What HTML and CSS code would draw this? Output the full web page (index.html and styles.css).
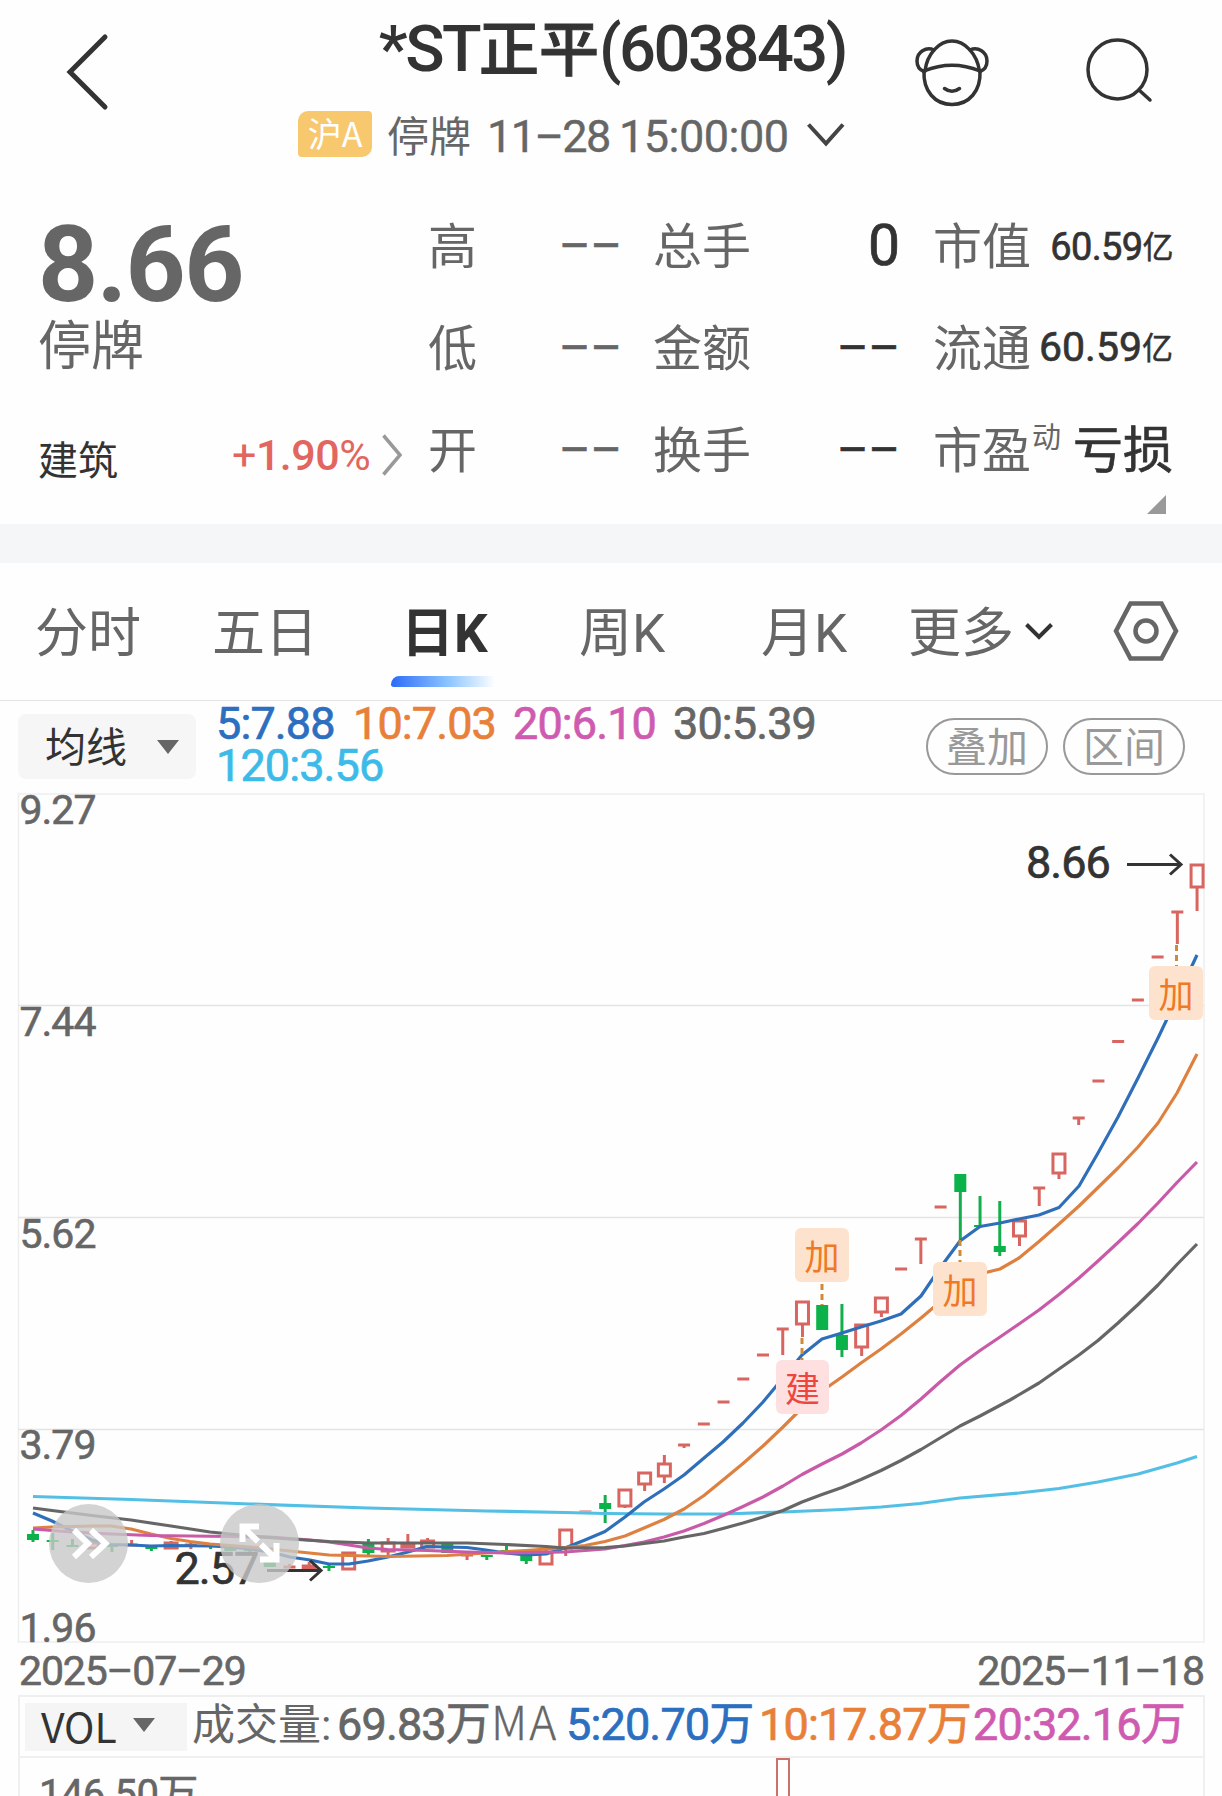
FILE: index.html
```html
<!DOCTYPE html>
<html lang="zh-Hans">
<head>
  <meta charset="UTF-8">
  <title>*ST正平(603843)</title>
  <link rel="stylesheet" href="styles.css">
</head>
<body>
  <header class="header">
    <svg class="back" width="60" height="90" viewBox="56 27 60 90"><path d="M105 37 L70 72 L105 107"/></svg>
    <div class="heading">
      <h1>*ST<span class="cn">正平</span>(603843)</h1>
      <div class="status">
        <span class="market">沪A</span>
        <span class="state">停牌</span>
        <span class="date">11–28</span>
        <span class="time">15:00:00</span>
        <svg width="40" height="30" viewBox="0 0 40 30"><path d="M2.500 4.500 L20 23.500 L37 4.500"/></svg>
      </div>
    </div>
    <div class="actions">
      <svg width="80" height="76" viewBox="912 34 80 76">
        <path d="M924 71 C923 91 935 104.500 952 104.500 C969 104.500 981 91 980 71"/>
        <path d="M925 71 C927 54 939 41 952 41 C965 41 977 54 979.500 71"/>
        <path d="M924 71 Q952 59.500 980 71"/>
        <path d="M934 50 C926 46.500 917 52 917 61 C917 66 920 70 924 71.500"/>
        <path d="M970 50 C978 46.500 987 52 987 61 C987 66 984 70 980 71.500"/>
        <path d="M944.500 88.500 Q952 94 959.500 88.500"/>
      </svg>
      <svg width="80" height="76" viewBox="1078 34 80 76">
        <circle cx="1117.500" cy="69.500" r="29.500"/>
        <path d="M1139 90 L1150 100"/>
      </svg>
    </div>
  </header>

  <section class="quote">
    <div class="price-box">
      <div class="price">8.66</div>
      <div class="price-state">停牌</div>
      <div class="industry">
        <span class="sector">建筑</span>
        <span class="up"><i>+</i>1.90<i>%</i></span>
        <svg width="22" height="46" viewBox="0 0 22 46"><path d="M2.500 3.500 L19 23 L2.500 42.500"/></svg>
      </div>
    </div>
    <div class="stats">
      <div class="stat"><span>高</span><b class="dash gray">––</b></div>
      <div class="stat"><span>总手</span><b class="num">0</b></div>
      <div class="stat"><span>市值</span><b class="small">60.59<em>亿</em></b></div>
      <div class="stat"><span>低</span><b class="dash gray">––</b></div>
      <div class="stat"><span>金额</span><b class="dash">––</b></div>
      <div class="stat"><span>流通</span><b class="mid">60.59<em>亿</em></b></div>
      <div class="stat"><span>开</span><b class="dash gray">––</b></div>
      <div class="stat"><span>换手</span><b class="dash">––</b></div>
      <div class="stat"><span>市盈<sup>动</sup></span><b class="text">亏损</b></div>
    </div>
    <div class="expand"></div>
  </section>

  <div class="band"></div>

  <nav class="tabs">
    <span class="tab">分时</span>
    <span class="tab">五日</span>
    <span class="tab active">日K</span>
    <span class="tab">周K</span>
    <span class="tab">月K</span>
    <span class="tab more">更多<svg width="30" height="20" viewBox="0 0 30 20"><path d="M2.500 3.500 L15 16 L27.500 3.500"/></svg></span>
    <svg class="setting" width="68" height="64" viewBox="0 0 68 64">
      <path d="M18.500 4.500 H49.500 L64 32 L49.500 59.500 H18.500 L4 32 Z"/>
      <circle cx="34" cy="32" r="10.500"/>
    </svg>
  </nav>

  <div class="ma-bar">
    <div class="picker"><span>均线</span><i class="caret"></i></div>
    <div class="ma-list">
      <span class="c5">5:7.88</span><span class="c10">10:7.03</span><span class="c20">20:6.10</span><span class="c30">30:5.39</span>
      <span class="c120">120:3.56</span>
    </div>
    <div class="pill">叠加</div>
    <div class="pill">区间</div>
  </div>

  <svg class="kline" id="kline" width="1222" height="850" viewBox="0 793 1222 850">
    <g class="grid">
      <path d="M18.500 794 H1204 V1642 H18.500 Z"/>
      <path class="inner" d="M18 1005.500 H1204 M18 1217.500 H1204 M18 1429.500 H1204"/>
    </g>
    <g id="candles"></g>
    <g id="lines"></g>
    <g class="axis">
      <text x="19.500" y="824">9.27</text>
      <text x="19.500" y="1036">7.44</text>
      <text x="19.500" y="1248">5.62</text>
      <text x="19.500" y="1459">3.79</text>
      <text x="19.500" y="1641.500">1.96</text>
    </g>
    <g class="mark">
      <text x="1026" y="878">8.66</text>
      <path d="M1127 864.500 H1181 M1170 854.500 L1181 864.500 L1170 874.500"/>
      <text x="174.500" y="1584">2.57</text>
      <path d="M267 1570.500 H321 M310 1560.500 L321 1570.500 L310 1580.500"/>
    </g>
    <g class="link">
      <path d="M822 1284 V1305 M802 1338 V1360 M960 1240 V1262 M1176.500 945 V966"/>
    </g>
    <g class="tags">
      <rect x="795" y="1228" width="54" height="54" rx="6"/><text x="822" y="1270">加</text>
      <rect x="933" y="1262" width="54" height="54" rx="6"/><text x="960" y="1304">加</text>
      <rect x="1149" y="966" width="54" height="54" rx="6"/><text x="1176" y="1008">加</text>
      <g class="build"><rect x="776" y="1360" width="53" height="54" rx="6"/><text x="802.500" y="1402">建</text></g>
    </g>
    <g class="float">
      <circle cx="88.500" cy="1543.500" r="39.500"/>
      <circle cx="259.500" cy="1543.500" r="39.500"/>
      <path d="M74 1530 L88 1543.500 L74 1557 M91 1530 L105.500 1543.500 L91 1557"/>
      <path d="M243 1527 L258 1541.500 M261 1544.500 L276 1559 M242.500 1542 V1526.500 H259 M276.500 1543 V1559.500 H260"/>
    </g>
  </svg>

  <div class="dates"><span>2025–07–29</span><span>2025–11–18</span></div>

  <div class="vol-bar">
    <div class="vol-picker">VOL<i class="caret"></i></div>
    <div class="vol-list">
      <span class="vol-name">成交量:</span><span class="vol-num">69.83万</span><span class="vol-ma">MA</span><span class="c5">5:20.70万</span><span class="c10">10:17.87万</span><span class="c20">20:32.16万</span>
    </div>
  </div>
  <div class="vol-chart">
    <span>146.50万</span>
    <i class="vol-column"></i>
  </div>

  <script src="chart.js"></script>
</body>
</html>
```
FILE: styles.css
```css
* {
  box-sizing: border-box;
}
body {
  margin: 0;
  width: 1222px;
  height: 1796px;
  overflow: hidden;
  background: #fefefe;
  color: #666;
  font-family: Roboto, "Noto Sans CJK SC", sans-serif;
}
svg {
  display: block;
  fill: none;
  flex: none;
  overflow: visible;
}
i, em {
  font-style: normal;
}

/* header */
.header {
  display: grid;
  grid-template-columns: 298px 548px 1fr;
  height: 194px;
}
.back {
  margin: 27px 0 0 56px;
  stroke: #333;
  stroke-width: 5;
  stroke-linecap: round;
}
h1 {
  margin: 0;
  height: 97px;
  line-height: 98px;
  font-size: 65px;
  font-weight: 500;
  letter-spacing: -2.500px;
  text-align: right;
  white-space: nowrap;
  color: #333;
}
h1 .cn {
  font-size: 60px;
  letter-spacing: 0;
  -webkit-text-stroke: 1px #333;
}
.status {
  display: flex;
  align-items: center;
  height: 79px;
  font-size: 45px;
  white-space: nowrap;
}
.market {
  width: 74px;
  height: 46px;
  margin-bottom: 5px;
  line-height: 44px;
  border-radius: 10px 4px 10px 4px;
  background: #f7c86e;
  color: #fff;
  font-family: "Noto Sans CJK SC", sans-serif;
  font-size: 34px;
  text-align: center;
}
.state {
  width: 101px;
  padding: 0 0 6px 15px;
  font-size: 42px;
}
.date {
  width: 132px;
  padding-left: 14px;
  letter-spacing: -1.600px;
  -webkit-text-stroke: .400px;
}
.time {
  width: 186px;
  padding-left: 14px;
  letter-spacing: -.500px;
  -webkit-text-stroke: .400px;
}
.status svg {
  margin: 0 0 3px 15px;
  stroke: #444;
  stroke-width: 4;
}
.actions {
  display: flex;
  padding: 34px 0 0 66px;
  gap: 86px;
}
.actions svg {
  stroke: #333;
  stroke-width: 3.500;
  stroke-linecap: round;
}

/* quote */
.quote {
  position: relative;
  display: flex;
  height: 330px;
  padding-left: 38px;
}
.price-box {
  width: 390px;
  padding-top: 17px;
}
.price {
  height: 112px;
  line-height: 110px;
  font-size: 105px;
  font-weight: 700;
  letter-spacing: -1.600px;
}
.price-state {
  height: 48px;
  line-height: 48px;
  font-size: 53px;
}
.industry {
  display: flex;
  align-items: center;
  height: 60px;
  margin-top: 54px;
  font-size: 40px;
  color: #333;
}
.sector {
  padding-top: 5px;
}
.industry .up {
  width: 141px;
  margin-left: auto;
  font-size: 43px;
  font-weight: 500;
  letter-spacing: -.500px;
  white-space: nowrap;
  color: #e2665f;
}
.up i {
  font-weight: 400;
}
.industry svg {
  margin: 0 25px 0 8px;
  stroke: #999;
  stroke-width: 3.500;
}
.stats {
  display: grid;
  grid-template-columns: 192px 247px 240px;
  grid-auto-rows: 102px;
  column-gap: 33px;
}
.stat {
  display: flex;
  justify-content: space-between;
  align-items: center;
  font-size: 49px;
  white-space: nowrap;
}
.stat > span {
  padding-bottom: 6px;
}
.stat sup {
  font-size: 29px;
  vertical-align: 20px;
  line-height: 0;
  margin-left: 1px;
}
.stat b {
  font-weight: 400;
  color: #333;
  -webkit-text-stroke: .700px;
}
.stat .gray {
  margin-right: -2px;
  color: #666;
}
.stat .dash {
  font-size: 48px;
}
.stat .num {
  font-size: 57px;
}
.stat .small {
  font-size: 38px;
  letter-spacing: -.600px;
}
.stat .mid {
  font-size: 41px;
}
.stat em {
  font-size: 31px;
  vertical-align: 2px;
  -webkit-text-stroke: .500px;
}
.stat .text {
  padding-bottom: 7px;
  font-size: 50px;
}
.expand {
  position: absolute;
  left: 1147px;
  top: 301px;
  border-left: 19px solid transparent;
  border-bottom: 19px solid #999;
}
.band {
  height: 39px;
  background: #f5f6f8;
}

/* period tabs */
.tabs {
  display: flex;
  align-items: flex-start;
  height: 138px;
  padding-left: 35px;
  border-bottom: 1px solid #e3e3e3;
  font-size: 53px;
  line-height: 142px;
}
.tab {
  position: relative;
  width: 182px;
  height: 137px;
  white-space: nowrap;
}
.tab:nth-child(1) {
  width: 177px;
}
.tab:nth-child(2) {
  width: 189px;
}
.tab:nth-child(3) {
  width: 178px;
}
.tab.active {
  color: #333;
  font-weight: 700;
}
.tab.active::after {
  content: "";
  position: absolute;
  left: -10px;
  top: 113px;
  width: 104px;
  height: 11px;
  border-radius: 9px 0 0 3px;
  background: linear-gradient(90deg, #2c6cf6, #8cc5ff 55%, #fefefe);
}
.tab:nth-child(5) {
  width: 147px;
}
.tab.more {
  display: flex;
  gap: 10px;
  width: 205px;
}
.more svg {
  margin-top: 58px;
  stroke: #333;
  stroke-width: 4;
}
.setting {
  margin: 36px 0 0 -1px;
  stroke: #666;
  stroke-width: 4.500;
}

/* moving averages */
.ma-bar {
  display: flex;
  height: 92px;
  padding-left: 18px;
}
.picker {
  display: flex;
  align-items: center;
  gap: 30px;
  width: 178px;
  height: 65px;
  margin-top: 13px;
  padding-left: 27px;
  border-radius: 8px;
  background: #f6f6f6;
  font-size: 41px;
  color: #333;
}
.picker span {
  padding-bottom: 5px;
}
.caret {
  border: 11px solid transparent;
  border-top: 14px solid #666;
  border-bottom: 0;
}
.ma-list {
  width: 710px;
  margin-left: 20px;
  padding-top: 2px;
  font-size: 45px;
  letter-spacing: -.900px;
  line-height: 42px;
  -webkit-text-stroke: .700px;
}
.ma-list span {
  display: inline-block;
  width: 160px;
}
.ma-list span:first-child {
  width: 137px;
}
.c5 {
  color: #2c6ebf;
}
.c10 {
  color: #e8803a;
}
.c20 {
  color: #cf5bb0;
}
.c120 {
  color: #3cbbe8;
}
.pill {
  width: 122px;
  height: 57px;
  margin: 17px 15px 0 0;
  border: 2px solid #999;
  border-radius: 29px;
  font-size: 41px;
  line-height: 56px;
  text-align: center;
  color: #999;
}

/* candles */
.grid {
  stroke: #eee;
  stroke-width: 1.500;
}
.grid .inner {
  stroke: #e4e4e4;
}
.up-bar {
  stroke: #d8655f;
  stroke-width: 3;
}
.down-bar {
  stroke: #14ae4c;
  stroke-width: 3;
}
.down-bar rect {
  fill: #0bb24a;
  stroke: none;
}
#lines {
  stroke-width: 3.200;
  stroke-linejoin: round;
}
.axis text {
  fill: #666;
  stroke: #666;
  stroke-width: .600;
  font-size: 41px;
  letter-spacing: -1px;
}
.mark text {
  fill: #333;
  stroke: #333;
  stroke-width: .700;
  font-size: 45px;
  letter-spacing: -1px;
}
.mark path {
  stroke: #333;
  stroke-width: 3;
}
.link {
  stroke: #cf8a36;
  stroke-width: 3;
  stroke-dasharray: 6 4;
}
.tags rect {
  fill: #fde3ce;
}
.tags text {
  fill: #ee7a26;
  font-size: 35px;
  text-anchor: middle;
}
.tags .build rect {
  fill: #fde0df;
}
.tags .build text {
  fill: #ee463f;
}
.float circle {
  fill: #c8c8c8;
  opacity: .800;
}
.float path {
  stroke: #fff;
  stroke-width: 6;
}
.dates {
  display: flex;
  justify-content: space-between;
  height: 52px;
  padding: 2px 18px 0 19px;
  font-size: 41px;
  letter-spacing: -1.150px;
  line-height: 52px;
  -webkit-text-stroke: .600px;
}

/* volume */
.vol-bar {
  display: flex;
  align-items: center;
  width: 1187px;
  height: 63px;
  margin-left: 18px;
  border: 2px solid #efefef;
  white-space: nowrap;
}
.vol-picker {
  display: flex;
  align-items: center;
  gap: 16px;
  width: 162px;
  height: 48px;
  margin-left: 5px;
  padding: 0 0 4px 16px;
  background: #f5f5f5;
  font-family: "Noto Sans CJK SC", sans-serif;
  font-size: 41px;
  color: #333;
}
.vol-list {
  display: flex;
  align-items: baseline;
  padding-bottom: 12px;
  font-size: 45px;
  letter-spacing: -.850px;
  -webkit-text-stroke: .700px;
}
.vol-list .vol-name {
  width: 150px;
  padding-left: 5px;
  font-size: 43px;
  letter-spacing: 0;
  -webkit-text-stroke: 0;
}
.vol-num {
  width: 154px;
}
.vol-list .vol-ma {
  width: 75px;
  font-family: "Noto Sans CJK SC", sans-serif;
  font-size: 46px;
  font-weight: 300;
  letter-spacing: 2px;
  line-height: 1;
  -webkit-text-stroke: .300px;
}
.vol-list .c5 {
  width: 193px;
}
.vol-list .c10 {
  width: 214px;
}
.vol-chart {
  display: flex;
  width: 1187px;
  height: 39px;
  margin-left: 18px;
  padding-left: 19px;
  border: solid #efefef;
  border-width: 0 2px;
  overflow: hidden;
  font-size: 40px;
  letter-spacing: -.600px;
  line-height: 73px;
  -webkit-text-stroke: .600px;
}
.vol-chart span {
  width: 737px;
}
.vol-column {
  width: 14px;
  height: 60px;
  border: 2.500px solid #c9716a;
}
```
FILE: chart.js
```js
const NS = 'http://www.w3.org/2000/svg';
const STEP = 19.73;
const X0 = 33;

// [type, high, body top, body bottom, low]  r = hollow up, d = flat up, g = down
const candles = [
  ['g', 1530, 1534, 1540, 1542], ['g', 1533, 1540, 1542, 1550], ['g', 1539, 1545, 1547, 1547],
  ['r', 1543, 1543, 1548, 1548], ['g', 1545, 1545, 1547, 1552], ['d', 1540, 1545, 1545, 1546],
  ['g', 1546, 1546, 1549, 1551], ['r', 1541, 1543, 1548, 1548], ['d', 1543, 1545, 1545, 1549],
  ['g', 1543, 1545, 1546, 1549], ['g', 1547, 1547, 1551, 1551], ['g', 1548, 1549, 1551, 1554],
  ['g', 1562, 1562, 1567, 1567], ['d', 1564, 1567, 1567, 1568], ['r', 1562, 1566, 1568, 1568],
  ['g', 1564, 1566, 1568, 1571], ['r', 1552, 1553, 1569, 1569], ['g', 1539, 1544, 1553, 1555],
  ['r', 1538, 1543, 1551, 1555], ['r', 1534, 1545, 1547, 1547], ['r', 1538, 1541, 1547, 1547],
  ['g', 1543, 1544, 1553, 1553], ['d', 1554, 1555, 1555, 1560], ['g', 1555, 1555, 1557, 1560],
  ['g', 1545, 1550, 1551, 1554], ['g', 1555, 1555, 1561, 1564], ['r', 1549, 1552, 1564, 1564],
  ['r', 1530, 1530, 1548, 1556], ['t', 1511, 1511, 1511, 1511], ['g', 1495, 1503, 1509, 1523],
  ['r', 1490, 1490, 1506, 1508], ['r', 1473, 1473, 1484, 1491], ['r', 1455, 1464, 1476, 1483],
  ['d', 1445, 1445, 1445, 1448], ['d', 1424, 1424, 1424, 1424], ['d', 1402, 1402, 1402, 1402],
  ['d', 1379, 1379, 1379, 1379], ['d', 1355, 1355, 1355, 1355], ['d', 1329, 1329, 1329, 1355],
  ['r', 1302, 1302, 1324, 1337], ['g', 1305, 1305, 1330, 1330], ['g', 1304, 1335, 1350, 1357],
  ['r', 1324, 1325, 1347, 1356], ['r', 1297, 1298, 1312, 1317], ['d', 1269, 1269, 1269, 1269],
  ['d', 1239, 1239, 1239, 1264], ['d', 1207, 1207, 1207, 1207], ['g', 1174, 1174, 1192, 1240],
  ['g', 1196, 1225, 1227, 1227], ['g', 1201, 1246, 1252, 1256], ['r', 1220, 1221, 1236, 1246],
  ['d', 1188, 1188, 1188, 1206], ['r', 1153, 1154, 1173, 1179], ['d', 1118, 1118, 1118, 1125],
  ['d', 1081, 1081, 1081, 1081], ['d', 1041.5, 1041.5, 1041.5, 1041.5], ['d', 1000, 1000, 1000, 1000],
  ['d', 957, 957, 957, 957], ['d', 912, 912, 912, 944], ['r', 864, 865, 887, 911]
];

const lines = {
  '#53bfe4': '33,1496.5 131,1499.5 250,1504 368,1508 486,1511 565,1512.5 605,1513.5 664,1514 723,1514 783,1512 842,1509.5 881,1507 920,1503.5 960,1498 1019,1493 1059,1488.5 1098,1482 1138,1474 1177,1463 1197,1456.5',
  '#2f6fb9': '33,1513 52,1521 72,1531 92,1540 111,1544.5 131,1545 151,1546 171,1545.5 210,1546 230,1547 250,1549 270,1552 290,1557 310,1560 329,1564 349,1564 368,1561 388,1557 408,1552 427,1546.5 447,1547 467,1547.5 486,1550 506,1553 526,1555 546,1554 565,1548 585,1540 605,1531.5 625,1517 644,1502 664,1489 684,1475 704,1458 723,1442 743,1423 763,1402 783,1378 802,1355 822,1339 842,1333 861,1327 881,1321 901,1314 921,1296 940,1268 960,1241 980,1226.5 1000,1223 1019,1219 1039,1215 1059,1207.5 1079,1186 1098,1153 1118,1117 1138,1078 1158,1038 1177,998 1197,955',
  '#de8040': '33,1528 52,1527 92,1526 111,1526 131,1529 151,1534 171,1538.5 190,1541.5 210,1544 250,1547 290,1551 329,1555 388,1556.5 447,1555.5 486,1553 526,1550.5 546,1549 565,1547.5 585,1545.5 605,1541.5 625,1536 644,1528 664,1519.5 684,1509 704,1495.5 723,1480 743,1463.5 763,1446 783,1427 802,1408 822,1391 842,1377 861,1363 881,1349 901,1334 921,1318 940,1302 960,1280 980,1274 1000,1269 1019,1258 1039,1241.5 1059,1224 1079,1206 1098,1187.5 1118,1168 1138,1147 1158,1123 1177,1093 1197,1054',
  '#c95aa8': '33,1529 52,1530.5 72,1532 111,1534 151,1535.5 230,1536.5 270,1537 310,1540 329,1542 349,1545 368,1548 388,1549.5 427,1550.5 467,1552 506,1553 565,1552 585,1550.5 605,1549 625,1545.5 644,1542 664,1537 684,1531 704,1523.5 723,1515.5 743,1506.5 763,1497 783,1486 802,1474.5 822,1464 842,1454 861,1443 881,1430 901,1415.5 921,1399 940,1382 960,1365 980,1350.5 1000,1337 1019,1324 1039,1310 1059,1294.5 1079,1278 1098,1261 1118,1242.5 1138,1223.5 1158,1203 1177,1182.5 1197,1162',
  '#666': '33,1508 52,1510.5 92,1515.5 131,1520 171,1526 210,1532 250,1536 290,1539 329,1541.5 368,1543 467,1543 506,1544.5 546,1546.5 565,1548 605,1547.5 625,1546 644,1543.5 664,1541 684,1537 704,1533.5 723,1528.5 743,1523 763,1517 783,1510.5 802,1502 822,1494.5 842,1487.5 861,1479.5 881,1470.5 901,1460.5 921,1449.5 940,1438 960,1426 980,1416 1010,1400 1039,1383 1059,1369 1079,1355 1098,1340.5 1118,1323 1138,1304.5 1158,1285 1177,1264.5 1197,1244'
};

function add(parent, tag, attrs) {
  const el = document.createElementNS(NS, tag);
  for (const key in attrs) el.setAttribute(key, attrs[key]);
  parent.appendChild(el);
  return el;
}

const box = document.getElementById('candles');
candles.forEach(([type, high, top, bottom, low], i) => {
  const x = X0 + STEP * i;
  const g = add(box, 'g', { class: type === 'g' ? 'down-bar' : 'up-bar' });
  if (type === 'g') {
    add(g, 'path', { d: `M${x} ${high} V${low}` });
    add(g, 'rect', { x: x - 6, y: top, width: 12, height: bottom - top });
  } else if (type === 'r') {
    add(g, 'path', { d: `M${x} ${high} V${top} M${x} ${bottom} V${low}` });
    add(g, 'rect', { x: x - 6, y: top, width: 12, height: bottom - top });
  } else if (type === 't') {
    add(g, 'path', { d: `M${x - 6} ${top} h12`, 'stroke-width': 1 });
  } else {
    add(g, 'path', { d: `M${x - 6} ${top} h12 M${x} ${high} V${low}` });
  }
});

const group = document.getElementById('lines');
for (const color in lines) {
  add(group, 'polyline', { points: lines[color], stroke: color });
}
```
